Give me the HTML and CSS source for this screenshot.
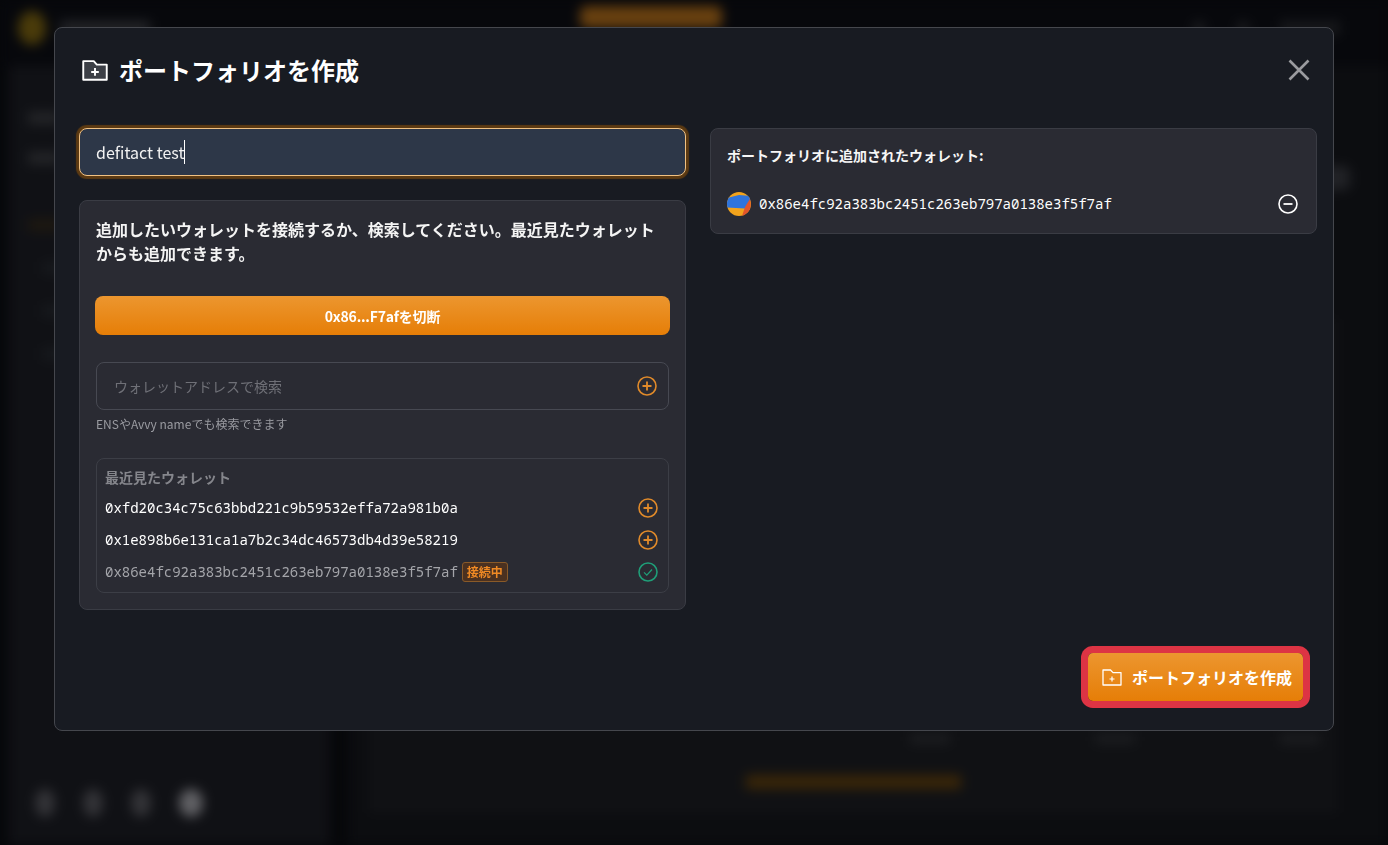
FILE: index.html
```html
<!DOCTYPE html>
<html lang="ja">
<head>
<meta charset="utf-8">
<title>ポートフォリオを作成</title>
<link rel="stylesheet" href="styles.css">
</head>
<body>
<div class="page" aria-hidden="true">
  <header class="top">
    <div class="brand"><span class="logo"></span><span class="brand-text"></span></div>
    <span class="top-cta"></span>
    <div class="top-right"><span class="dot"></span><span class="dot"></span><span class="pill"></span></div>
  </header>
  <div class="shell">
    <aside class="side">
      <div class="side-nav">
        <span class="bar"></span><span class="bar"></span>
        <span class="bar bar-o"></span><span class="bar bar-s"></span><span class="bar bar-s"></span><span class="bar bar-s"></span>
      </div>
      <div class="socials"><span class="soc"></span><span class="soc"></span><span class="soc"></span><span class="soc soc-b"></span></div>
    </aside>
    <main class="main">
      <div class="side-chip"></div>
      <div class="card">
        <div class="card-labels"><span></span><span></span><span></span></div>
        <div class="card-foot"><span class="card-link"></span></div>
      </div>
    </main>
  </div>
</div>

<section class="modal">
  <header class="modal-head">
    <h1 class="modal-title">
      <svg class="ic-title" viewBox="0 0 27 22"><path d="M1.2 1.2h11l3.2 3.6h10.4v15.9H1.2z" fill="#3c3f46" stroke="#fff" stroke-width="2" stroke-linejoin="round"/><path d="M13.5 8.500v8M9.500 12.500h8" stroke="#fff" stroke-width="2" fill="none"/></svg>
      ポートフォリオを作成
    </h1>
    <button class="close" aria-label="閉じる"><svg viewBox="0 0 22 22"><path d="M1.500 1.500l19 19M20.500 1.500l-19 19" stroke="#9a9b9f" stroke-width="2.600" fill="none"/></svg></button>
  </header>

  <div class="modal-body">
    <div class="col">
      <div class="name-field"><span>defitact test</span><i class="caret"></i></div>
      <div class="panel panel-left">
        <p class="lead">追加したいウォレットを接続するか、検索してください。最近見たウォレットからも追加できます。</p>
        <button class="btn-wide">0x86...F7afを切断</button>
        <div class="search">
          <input class="search-input" type="text" placeholder="ウォレットアドレスで検索">
          <svg class="ic-round" viewBox="0 0 20 20"><circle cx="10" cy="10" r="9" fill="none" stroke="#e08a2a" stroke-width="1.600"/><path d="M10 5.500v9M5.500 10h9" stroke="#e08a2a" stroke-width="1.800" fill="none"/></svg>
        </div>
        <p class="hint">ENSやAvvy nameでも検索できます</p>
        <div class="recent">
          <h2 class="recent-title">最近見たウォレット</h2>
          <div class="rows">
            <div class="row">
              <span class="addr">0xfd20c34c75c63bbd221c9b59532effa72a981b0a</span>
              <svg class="ic-round" viewBox="0 0 20 20"><circle cx="10" cy="10" r="9" fill="none" stroke="#e08a2a" stroke-width="1.600"/><path d="M10 5.500v9M5.500 10h9" stroke="#e08a2a" stroke-width="1.800" fill="none"/></svg>
            </div>
            <div class="row">
              <span class="addr">0x1e898b6e131ca1a7b2c34dc46573db4d39e58219</span>
              <svg class="ic-round" viewBox="0 0 20 20"><circle cx="10" cy="10" r="9" fill="none" stroke="#e08a2a" stroke-width="1.600"/><path d="M10 5.500v9M5.500 10h9" stroke="#e08a2a" stroke-width="1.800" fill="none"/></svg>
            </div>
            <div class="row">
              <span class="addr addr-dim">0x86e4fc92a383bc2451c263eb797a0138e3f5f7af</span>
              <span class="badge">接続中</span>
              <svg class="ic-round" viewBox="0 0 20 20"><circle cx="10" cy="10" r="9" fill="none" stroke="#1f9e78" stroke-width="1.600"/><path d="M6 10.300l2.800 2.800 5.200-5.600" stroke="#1f9e78" stroke-width="1.200" fill="none"/></svg>
            </div>
          </div>
        </div>
      </div>
    </div>

    <div class="col">
      <div class="panel panel-right">
        <h2 class="added-title">ポートフォリオに追加されたウォレット:</h2>
        <div class="added-row">
          <svg class="avatar" viewBox="0 0 24 24">
            <defs><clipPath id="av"><circle cx="12" cy="12" r="12"/></clipPath></defs>
            <g clip-path="url(#av)">
              <rect width="24" height="24" fill="#f2a31c"/>
              <path d="M0 6l12-3 12 1v4l-6 8.500-18-1z" fill="#2f74dc"/>
              <path d="M23.500 6l-5.500 9-3 9h9z" fill="#e2552a"/>
            </g>
          </svg>
          <span class="addr">0x86e4fc92a383bc2451c263eb797a0138e3f5f7af</span>
          <svg class="ic-round ic-minus" viewBox="0 0 20 20"><circle cx="10" cy="10" r="9" fill="none" stroke="#fff" stroke-width="1.600"/><path d="M5.500 10h9" stroke="#fff" stroke-width="1.800" fill="none"/></svg>
        </div>
      </div>
    </div>
  </div>

  <footer class="modal-foot">
    <button class="btn-create">
      <svg class="ic-btn" viewBox="0 0 20 17"><path d="M1 1h7.500l2.500 2.600h8V16H1z" fill="none" stroke="#fff" stroke-width="1.300" stroke-linejoin="round"/><path d="M10 7.500v5M7.500 10h5" stroke="#fff" stroke-width="1.200" fill="none"/></svg>
      ポートフォリオを作成
    </button>
  </footer>
</section>
</body>
</html>
```

FILE: styles.css
```css
* { box-sizing: border-box; }
html, body { height: 100%; }
body {
  margin: 0;
  background: #06070a;
  overflow: hidden;
  font-family: "Noto Sans CJK JP", "Noto Sans", sans-serif;
  color: #fff;
}
button { font-family: inherit; border: 0; padding: 0; }
h1, h2, p { margin: 0; }

/* blurred page behind the dialog */
.page {
  height: 845px;
  display: flex;
  flex-direction: column;
  filter: blur(6px);
}
.top {
  height: 66px;
  flex: none;
  display: flex;
  align-items: center;
  padding: 0 48px 10px 18px;
  background: #07080c;
}
.brand { width: 562px; display: flex; align-items: center; gap: 14px; }
.logo { width: 28px; height: 34px; border-radius: 50%; background: #4a3b0a; }
.brand-text { width: 90px; height: 14px; background: #232427; }
.top-cta { width: 142px; height: 22px; margin-top: -22px; border-radius: 6px; background: #68400f; }
.top-right { margin-left: auto; display: flex; gap: 30px; align-items: center; }
.dot { width: 14px; height: 14px; border-radius: 50%; background: #1a1b1e; }
.pill { width: 60px; height: 14px; background: #17181b; }
.shell { flex: 1; display: flex; gap: 18px; padding-left: 8px; }
.side {
  width: 322px;
  display: flex;
  flex-direction: column;
  justify-content: space-between;
  padding: 46px 0 28px 20px;
  background: #101115;
}
.side-nav { display: flex; flex-direction: column; gap: 28px; align-items: flex-start; }
.bar { width: 32px; height: 12px; background: #242528; }
.bar-o { background: #1e1810; margin-top: 27px; }
.bar-s { background: #17191d; margin-left: 14px; margin-top: 3px; }
.socials { display: flex; gap: 28px; padding-left: 7px; }
.soc { width: 20px; height: 28px; border-radius: 50%; background: #333337; }
.soc-b { background: #606064; width: 24px; }
.main {
  flex: 1;
  display: flex;
  flex-direction: column;
  padding: 100px 52px 33px 22px;
  background: #0c0d10;
}
.side-chip { align-self: flex-end; width: 28px; height: 24px; margin-right: -14px; border-radius: 6px; background: #212226; }
.card {
  flex: 1;
  margin-top: 130px;
  display: flex;
  flex-direction: column;
  justify-content: flex-end;
  background: #101114;
  border: 1px solid #17181c;
}
.card-labels { display: flex; justify-content: flex-end; gap: 145px; padding: 0 15px 8px 0; }
.card-labels span { width: 40px; height: 8px; background: #1e1f22; }
.card-foot { height: 60px; display: flex; justify-content: center; align-items: flex-start; padding: 24px 0 0 0; }
.card-link { width: 215px; height: 14px; background: #3a2608; }

/* dialog */
.modal {
  position: fixed;
  left: 54px;
  top: 27px;
  width: 1280px;
  height: 704px;
  display: flex;
  flex-direction: column;
  background: #181b22;
  border: 1px solid #45474d;
  border-radius: 8px;
}
.modal-head {
  height: 100px;
  flex: none;
  display: flex;
  justify-content: space-between;
  align-items: flex-start;
  padding: 26px 23px 0 27px;
}
.modal-title {
  display: flex;
  align-items: center;
  gap: 11px;
  font-size: 24px;
  font-weight: 700;
  line-height: 32px;
}
.ic-title { width: 26px; height: 21px; flex: none; }
.close { width: 22px; height: 22px; margin-top: 5px; background: none; }
.close svg { display: block; width: 22px; height: 22px; }

.modal-body {
  display: grid;
  grid-template-columns: 607px 607px;
  gap: 24px;
  padding-left: 24px;
}
.col { display: flex; flex-direction: column; gap: 24px; }
.name-field {
  height: 48px;
  display: flex;
  align-items: center;
  padding: 0 16px;
  background: #2d3748;
  border: 1px solid #f0c183;
  border-radius: 8px;
  box-shadow: 0 0 1px 3px #5c3a12;
  font-size: 16px;
  color: #f2f2f2;
}
.caret { width: 1px; height: 24px; background: #fff; }
.panel {
  background: #2a2b33;
  border: 1px solid #3a3c44;
  border-radius: 8px;
  padding: 16px;
}
.panel-left { height: 410px; display: flex; flex-direction: column; }
.lead { font-size: 16px; font-weight: 700; line-height: 24px; color: #f4f4f4; }
.btn-wide {
  height: 39px;
  margin: 31px -1px 0;
  flex: none;
  border-radius: 8px;
  background: linear-gradient(#ec962f, #e67e07);
  color: #fff;
  font-size: 14px;
  font-weight: 700;
  letter-spacing: -0.2px;
}
.search {
  height: 48px;
  flex: none;
  margin-top: 27px;
  width: 573px;
  display: flex;
  align-items: center;
  padding: 0 11px 0 15px;
  border: 1px solid #474952;
  border-radius: 8px;
}
.search-input {
  flex: 1;
  min-width: 0;
  border: 0;
  outline: 0;
  background: none;
  font: 14px "Noto Sans CJK JP", sans-serif;
  color: #fff;
}
.search-input::placeholder { color: #6f7077; }
.ic-round { width: 20px; height: 20px; flex: none; }
.hint { margin-top: 5px; font-size: 12px; line-height: 18px; color: #9a9ba1; }
.recent {
  width: 573px;
  margin-top: 25px;
  padding: 7px 10px 4px 8px;
  border: 1px solid #3c3e46;
  border-radius: 8px;
  flex: none;
}
.recent-title { font-size: 14px; font-weight: 700; line-height: 22px; color: #85868c; }
.rows { margin-top: 4px; }
.row { height: 32px; display: flex; align-items: center; gap: 4px; }
.row .ic-round { margin-left: auto; }
.addr {
  font-family: "Noto Sans Mono", "DejaVu Sans Mono", monospace;
  font-size: 14px;
  font-weight: 400;
  line-height: 20px;
  color: #fff;
}
.addr-dim { color: #a4a5aa; }
.badge {
  height: 20px;
  padding: 0 4px;
  border: 1px solid #8a5a28;
  border-radius: 3px;
  background: #4b3120;
  color: #f08a24;
  font-size: 12px;
  font-weight: 700;
  line-height: 18px;
}
.panel-right { height: 106px; }
.added-title { font-size: 14px; font-weight: 700; line-height: 22px; margin-top: -1px; color: #f6f6f6; }
.added-row { display: flex; align-items: center; gap: 8px; margin-top: 26px; padding-right: 2px; }
.avatar { width: 24px; height: 24px; flex: none; }
.ic-minus { margin-left: auto; }

.modal-foot { margin-top: auto; display: flex; justify-content: flex-end; padding: 0 30px 29px 0; }
.btn-create {
  width: 215px;
  height: 48px;
  display: flex;
  align-items: center;
  justify-content: center;
  gap: 10px;
  padding-left: 3px;
  border-radius: 5px;
  background: linear-gradient(#ec962f, #e67e07);
  box-shadow: 0 0 0 7px #dd3444;
  color: #fff;
  font-size: 16px;
  font-weight: 700;
}
.ic-btn { width: 20px; height: 17px; flex: none; }
```
